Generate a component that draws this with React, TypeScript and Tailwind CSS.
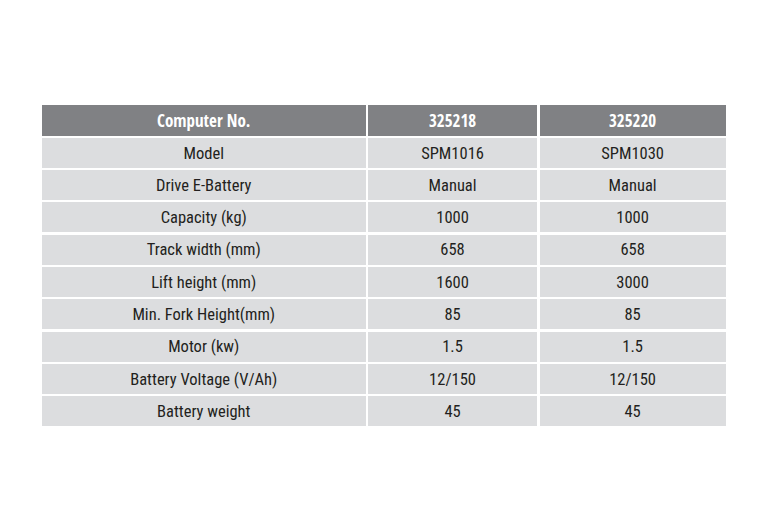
const rows: [string, string, string][] = [
  ['Model', 'SPM1016', 'SPM1030'],
  ['Drive E-Battery', 'Manual', 'Manual'],
  ['Capacity (kg)', '1000', '1000'],
  ['Track width (mm)', '658', '658'],
  ['Lift height (mm)', '1600', '3000'],
  ['Min. Fork Height(mm)', '85', '85'],
  ['Motor (kw)', '1.5', '1.5'],
  ['Battery Voltage (V/Ah)', '12/150', '12/150'],
  ['Battery weight', '45', '45'],
];

const head = 'h-[30.5px] pt-[1px] bg-[#808184] text-white font-bold text-[17px] font-["Open_Sans_Condensed",sans-serif] flex items-center justify-center';
const cell = 'h-[30px] pt-[2px] bg-[#dcdddf] text-[#231f20] text-[16.5px] font-["Roboto_Condensed",sans-serif] flex items-center justify-center';

export default function App() {
  return (
    <div className="w-[768px] h-[531px] bg-white pt-[105px] pl-[42px]">
      <div className="grid grid-cols-[323.5px_169.5px_186px] gap-[2.3px] w-[684px] leading-none">
        <div className={head}>Computer No.</div>
        <div className={head}>325218</div>
        <div className={head}>325220</div>
        {rows.map((r) =>
          r.map((text, i) => (
            <div key={r[0] + i} className={cell}>
              {text}
            </div>
          ))
        )}
      </div>
    </div>
  );
}
